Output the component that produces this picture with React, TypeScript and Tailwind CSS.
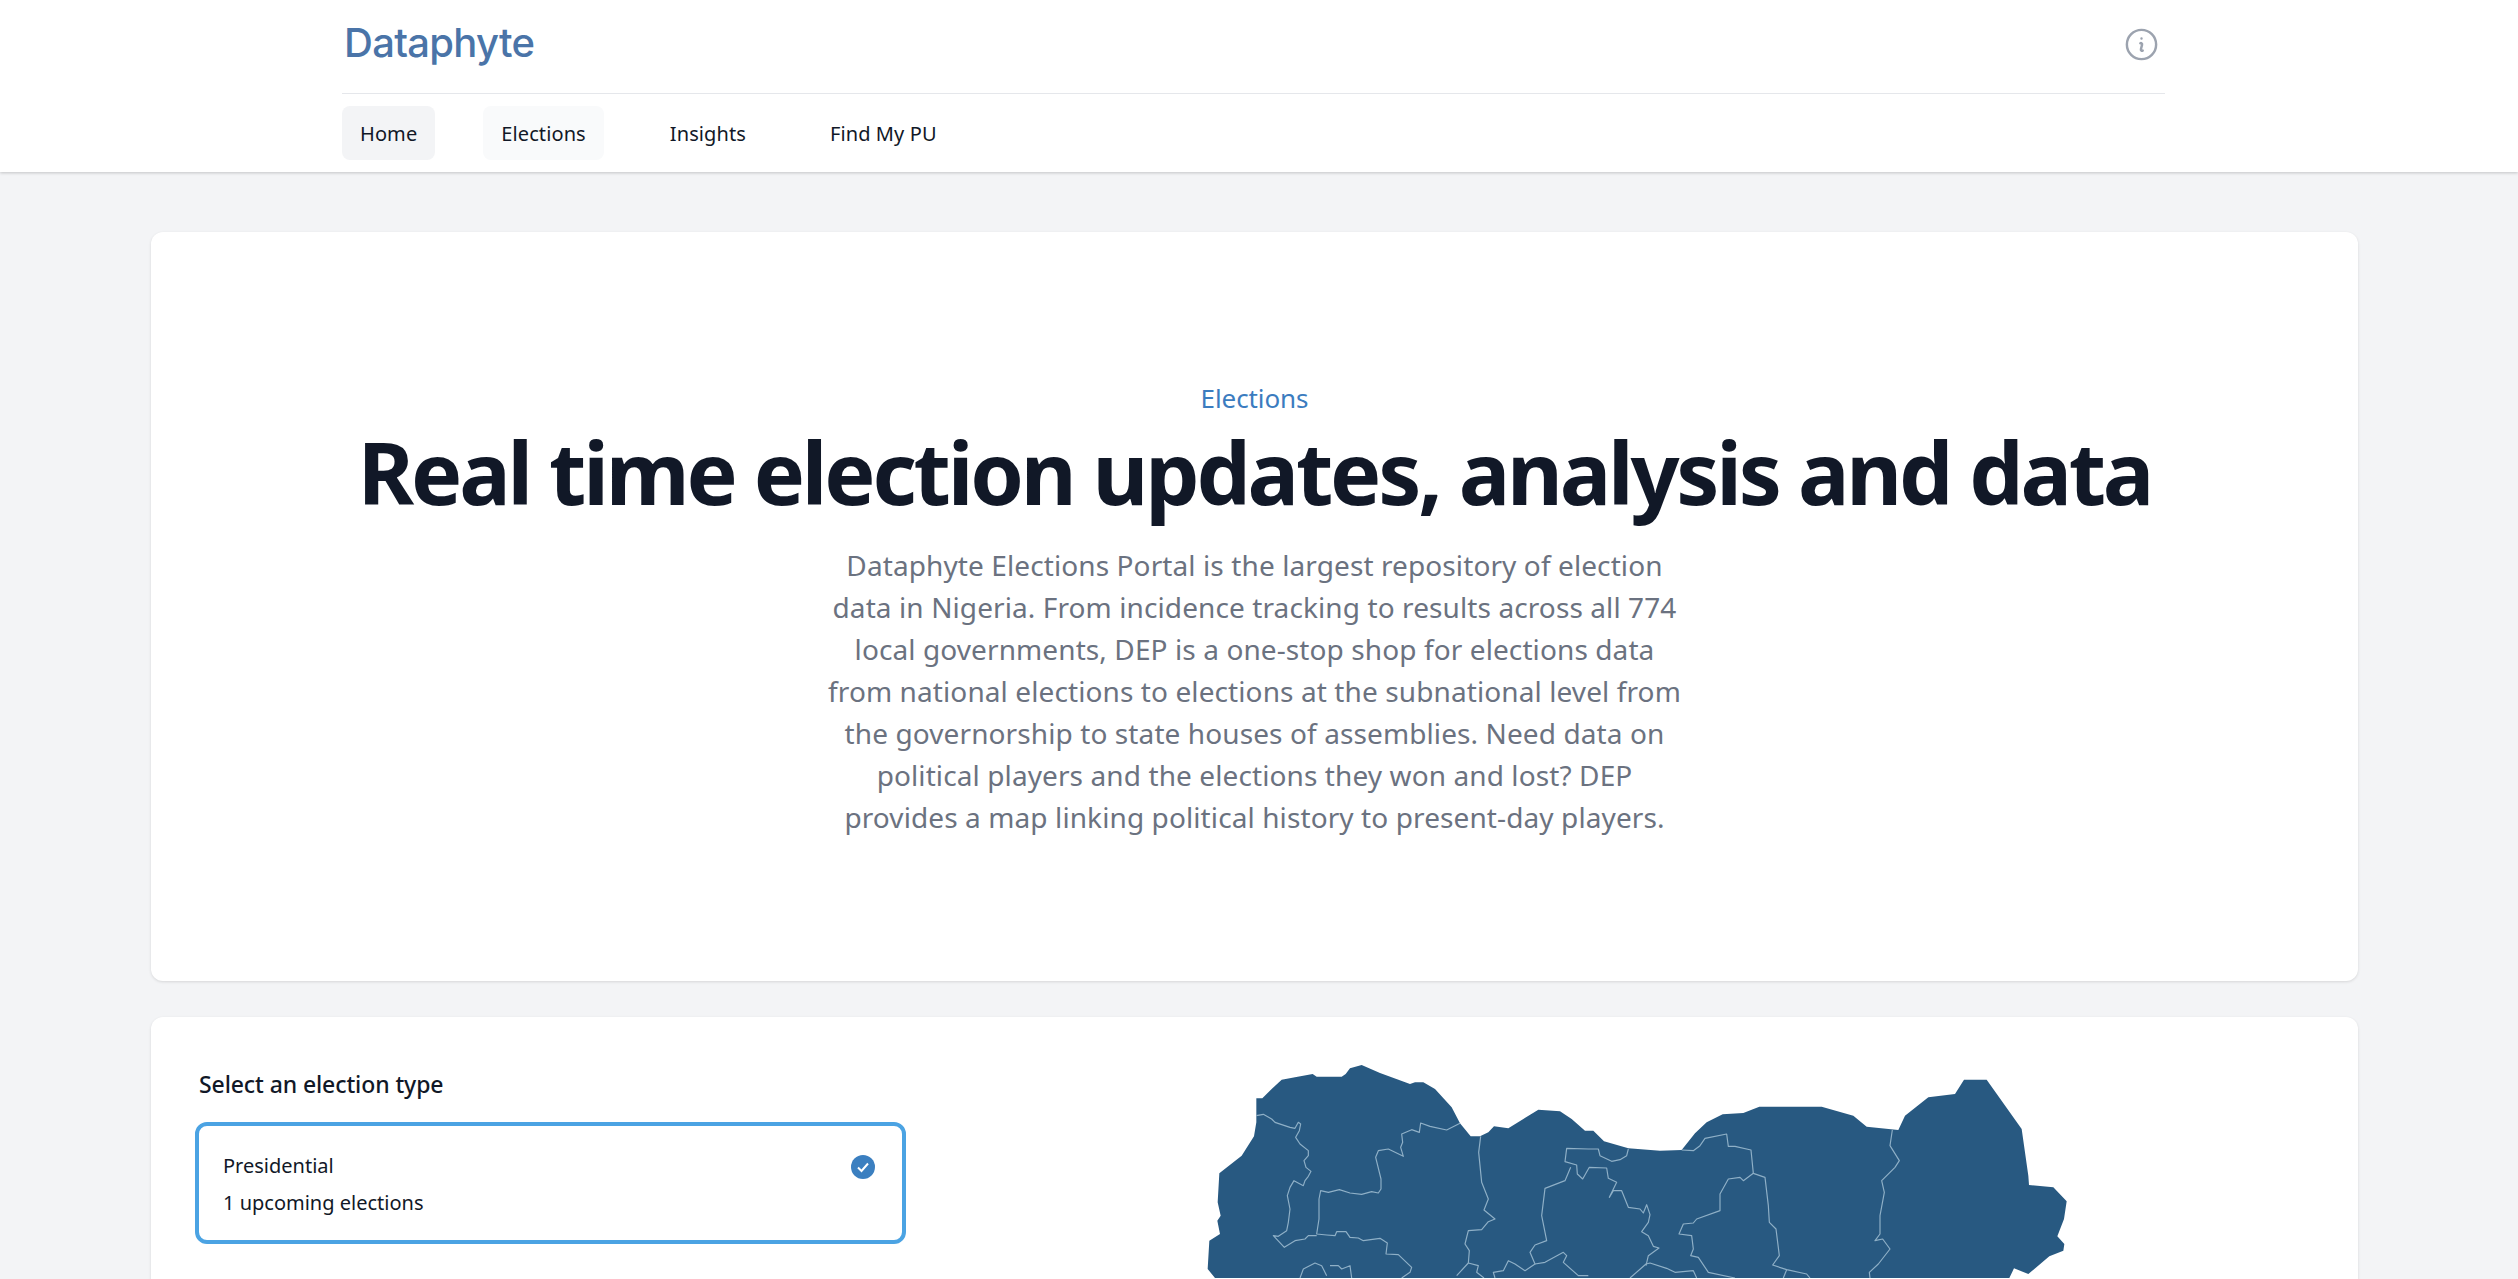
import { HiOutlineInformationCircle } from 'react-icons/hi2';

const NAV_ITEMS = [
  { label: 'Home', className: 'bg-[#f3f4f6]' },
  { label: 'Elections', className: 'bg-[#f9fafb]' },
  { label: 'Insights', className: '' },
  { label: 'Find My PU', className: '' },
];

const INTRO_LINES = [
  'Dataphyte Elections Portal is the largest repository of election',
  'data in Nigeria. From incidence tracking to results across all 774',
  'local governments, DEP is a one-stop shop for elections data',
  'from national elections to elections at the subnational level from',
  'the governorship to state houses of assemblies. Need data on',
  'political players and the elections they won and lost? DEP',
  'provides a map linking political history to present-day players.',
];

// Map traced from the reference, clipped by the bottom of the window
const OUTLINE =
  'M229 178 247 178 275 150 305 122 345 115 398 105 410 113 440 113 485 113 497 105 510 88 545 78 600 102 690 135 705 130 730 130 765 150 815 205 840 253 872 292 900 292 925 280 942 262 985 268 1030 240 1075 212 1140 217 1175 240 1215 275 1240 275 1272 307 1345 328 1440 335 1505 333 1545 283 1580 250 1628 226 1690 222 1738 203 1925 203 2020 230 2060 263 2155 273 2175 230 2245 175 2325 165 2352 122 2420 122 2525 270 2545 410 2547 438 2620 445 2660 487 2652 540 2632 592 2653 615 2650 635 2608 652 2545 705 2502 688 2488 717 105 717 83 690 88 605 120 585 112 545 122 530 113 490 118 403 185 350 222 292 229 250Z';

const BORDERS = [
  'M229 230 250 226 275 240 285 250 330 265 345 268 355 250 362 255 358 275 347 295 360 315 385 335 385 350 372 365 378 385 393 397 385 412 375 425 370 440 342 425 330 445 322 470 330 510 325 550 320 575 295 592 280 590 313 625 345 605 375 600 385 590 410 590',
  'M840 253 800 273 750 262 722 252 718 280 695 272 665 285 668 310 662 325 670 352 625 330 595 335 587 355 603 420 603 450 595 462 575 458 545 466 510 462 478 452 445 460 422 455 417 480 417 540 410 585 440 588 465 590 470 578 498 578 510 595 535 597 550 605 600 598 622 612 618 645 655 647 695 685 690 700 665 717',
  'M902 292 896 340 905 430 925 480 912 513 945 540 925 548 905 572 865 575 855 615 868 635 865 672 830 710',
  'M865 672 895 680 890 700 912 717',
  'M360 717 370 690 405 672 425 680 440 710',
  'M450 680 475 680 485 690 510 680 515 717',
  'M1345 330 1340 350 1320 362 1295 367 1260 350 1255 330 1225 330 1160 328 1155 368 1190 378 1192 405 1208 420 1228 385 1280 387 1285 418 1310 430 1288 475 1300 455 1325 455 1345 505 1380 510 1390 522 1400 497 1410 527 1405 550 1385 578 1405 590 1420 622 1437 627 1405 650 1398 680',
  'M1172 385 1155 425 1095 448 1085 530 1100 605 1065 618 1050 640 1065 675 1035 695 1005 675 985 665 970 695 940 700 945 717',
  'M1065 675 1095 670 1150 640 1160 650 1150 670 1195 710 1225 710',
  'M1350 717 1398 675 1410 672 1460 688 1485 700 1540 695 1550 717',
  'M1505 333 1540 335 1560 320 1575 298 1640 285 1645 322 1665 322 1713 333 1720 403 1755 415 1765 500 1768 550 1788 570 1798 650 1778 678 1820 692 1880 705 1890 717',
  'M1720 403 1690 425 1680 415 1645 420 1620 465 1620 515 1550 540 1540 552 1510 555 1497 585 1535 590 1540 630 1532 650 1555 655 1585 700 1665 717',
  'M1820 692 1810 717',
  'M2137 273 2130 320 2158 365 2145 385 2105 425 2113 460 2100 530 2100 585 2085 605 2108 600 2130 630 2095 675 2068 700 2070 717',
];

function NigeriaMap() {
  return (
    <svg viewBox="0 0 2880 717" className="block w-[960px] h-[239px]">
      <path d={OUTLINE} fill="#285981" />
      {BORDERS.map((d) => (
        <path key={d} d={d} fill="none" stroke="#8fb0c7" strokeWidth="3.5" strokeLinejoin="round" />
      ))}
    </svg>
  );
}

export default function App() {
  return (
    <div className="h-screen overflow-hidden bg-[#f3f4f6] font-['Noto_Sans',sans-serif]">
      {/* Header */}
      <header className="h-[172px] bg-white shadow-[0_1px_3px_rgba(0,0,0,0.2)] pl-[342px] pr-[353px]">
        <div className="h-[94px] border-b border-[#e5e7eb] flex items-start justify-between">
          <span className="ml-[2px] mt-[16px] font-['Inter',sans-serif] text-[40px] leading-[54px] font-medium tracking-[-0.7px] text-[#4a74a8]">
            Dataphyte
          </span>
          <HiOutlineInformationCircle className="mt-[25px] mr-[4px] w-[39px] h-[39px] text-[#9ca3af]" />
        </div>
        <nav className="flex gap-[48px] mt-[12px]">
          {NAV_ITEMS.map((item) => (
            <a
              key={item.label}
              className={`h-[54px] px-[18px] pt-[2px] rounded-lg flex items-center text-[20px] tracking-[0.1px] text-[#111827] ${item.className}`}
            >
              {item.label}
            </a>
          ))}
        </nav>
      </header>

      <main className="pl-[151px] pr-[160px] pt-[60px] flex flex-col gap-[36px]">
        {/* Hero */}
        <section className="h-[749px] bg-white rounded-xl shadow-[0_1px_3px_rgba(0,0,0,0.12)] flex flex-col items-center pt-[144px] text-center">
          <p className="text-[26px] leading-[44px] tracking-[-0.1px] text-[#3b7cbf]">Elections</p>
          <h1 className="text-[86px] leading-[104px] font-bold tracking-[-3.2px] text-[#111827] whitespace-nowrap">
            Real time election updates, analysis and data
          </h1>
          <p className="mt-[20px] text-[28px] leading-[42px] tracking-[0.1px] text-[#6b7280] whitespace-nowrap">
            {INTRO_LINES.map((line) => (
              <span key={line} className="block">
                {line}
              </span>
            ))}
          </p>
        </section>

        {/* Election type picker + map */}
        <section className="h-[400px] bg-white rounded-xl shadow-[0_1px_3px_rgba(0,0,0,0.12)] flex">
          <div className="w-[1029px] pl-[44px] pt-[51px]">
            <h2 className="ml-[4px] text-[23px] leading-[32px] font-medium tracking-[-0.1px] text-[#111827]">
              Select an election type
            </h2>
            <div className="mt-[22px] w-[711px] h-[122px] border-4 border-[#4ba3e3] rounded-xl pl-[24px] pr-[27px] pt-[21px] flex justify-between">
              <div className="text-[20px] leading-[37px] tracking-[0px] text-[#111827]">
                <p>Presidential</p>
                <p>1 upcoming elections</p>
              </div>
              <svg viewBox="0 0 24 24" className="w-[24px] h-[24px] mt-[8px]">
                <circle cx="12" cy="12" r="12" fill="#3b7fc0" />
                <path d="M7 12.5l3.5 3.5L17 8.5" fill="none" stroke="#fff" strokeWidth="2" />
              </svg>
            </div>
          </div>
          <div className="pt-[22px]">
            <NigeriaMap />
          </div>
        </section>
      </main>
    </div>
  );
}
